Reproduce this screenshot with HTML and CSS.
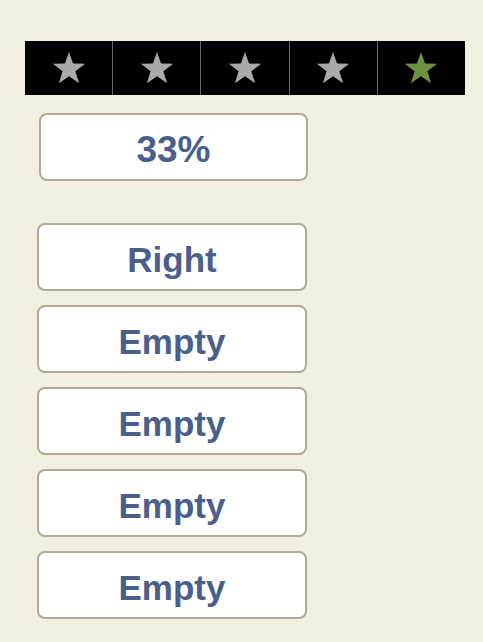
FILE: index.html
```html
<!DOCTYPE html>
<html lang="en">

<head>
    <meta charset="UTF-8">
    <meta name="viewport" content="width=device-width, initial-scale=1.0">
    <title>Rating</title>
    <link rel="stylesheet" href="styles.css">
</head>

<body>
    <div class="stars">
        <div class="star"><svg viewBox="0 0 100 95"><polygon points="50,0 62,34 98,35 69,57 80,93 50,72 20,93 31,57 2,35 38,34"></polygon></svg></div>
        <div class="star"><svg viewBox="0 0 100 95"><polygon points="50,0 62,34 98,35 69,57 80,93 50,72 20,93 31,57 2,35 38,34"></polygon></svg></div>
        <div class="star"><svg viewBox="0 0 100 95"><polygon points="50,0 62,34 98,35 69,57 80,93 50,72 20,93 31,57 2,35 38,34"></polygon></svg></div>
        <div class="star"><svg viewBox="0 0 100 95"><polygon points="50,0 62,34 98,35 69,57 80,93 50,72 20,93 31,57 2,35 38,34"></polygon></svg></div>
        <div class="star star-selected"><svg viewBox="0 0 100 95"><polygon points="50,0 62,34 98,35 69,57 80,93 50,72 20,93 31,57 2,35 38,34"></polygon></svg></div>
    </div>

    <div class="box score">33%</div>

    <div class="answers">
        <div class="box">Right</div>
        <div class="box">Empty</div>
        <div class="box">Empty</div>
        <div class="box">Empty</div>
        <div class="box">Empty</div>
    </div>
</body>

</html>
```

FILE: styles.css
```css
* {
    box-sizing: border-box;
}

html,
body {
    margin: 0;
    padding: 0;
    background: #f2eee2;
    font-family: "Liberation Sans", Arial, sans-serif;
}

.stars {
    display: flex;
    width: 440px;
    height: 54px;
    margin: 41px 0 0 25px;
    background: #000;
}

.star {
    flex: 1;
    display: flex;
    align-items: center;
    justify-content: center;
    border-left: 1px solid #6a6a6a;
}

.star:first-child {
    border-left: none;
}

.star svg {
    width: 34px;
    height: 32px;
    fill: #a9a9a9;
}

.star-selected svg {
    fill: #6b9340;
}

.box {
    display: flex;
    align-items: center;
    justify-content: center;
    width: 270px;
    height: 68px;
    padding-top: 6px;
    background: #fff;
    border: 2px solid #b1aa97;
    border-radius: 8px;
    color: #4b5f8b;
    font-size: 35px;
    font-weight: 700;
}

.score {
    width: 269px;
    margin: 18px 0 0 39px;
    font-size: 37px;
}

.answers {
    display: flex;
    flex-direction: column;
    gap: 14px;
    margin: 42px 0 0 37px;
}
```
